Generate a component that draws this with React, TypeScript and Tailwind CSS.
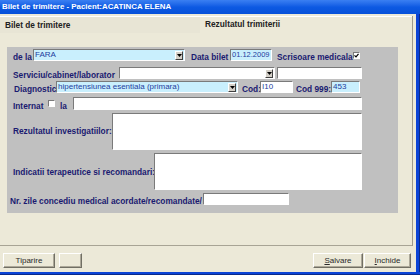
import React from "react";

const LBL = "text-[8.3px] font-bold text-[#1a1a70] leading-none whitespace-nowrap";

function DropBtn() {
  return (
    <div className="w-[8px] h-[9px] mr-[1px] shrink-0 bg-[#d4d0c8] border border-t-white border-l-white border-b-[#404040] border-r-[#404040] flex items-center justify-center">
      <svg width="5" height="3" viewBox="0 0 5 3">
        <path d="M0 0H5L2.5 3Z" fill="#000" />
      </svg>
    </div>
  );
}

function Field({ className, value, arrow, small }: { className: string; value?: string; arrow?: boolean; small?: boolean }) {
  return (
    <div
      className={`flex items-center shrink-0 border border-t-[#7a7a7a] border-l-[#7a7a7a] border-b-white border-r-white ${className}`}
    >
      <span
        className={`flex-1 pl-[1px] text-[#23409e] leading-none overflow-hidden whitespace-nowrap font-['Liberation_Sans'] ${small ? "text-[7.5px]" : "text-[8px]"}`}
      >
        {value}
      </span>
      {arrow && <DropBtn />}
    </div>
  );
}

function Check({ checked }: { checked?: boolean }) {
  return (
    <div className="w-[7px] h-[7px] shrink-0 bg-white border border-t-[#7a7a7a] border-l-[#7a7a7a] border-b-white border-r-white flex items-center justify-center">
      {checked && (
        <svg width="5" height="5" viewBox="0 0 5 5">
          <path d="M0.5 2.3L2 3.8L4.5 0.8" stroke="#000" strokeWidth="1.2" fill="none" />
        </svg>
      )}
    </div>
  );
}

function Btn({ className, children }: { className: string; children: React.ReactNode }) {
  return (
    <div
      className={`h-[15px] shrink-0 bg-[#ece9d8] border border-t-white border-l-white border-b-[#716f64] border-r-[#716f64] shadow-[inset_-1px_-1px_0_#aca899] flex items-center justify-center text-[8px] text-[#2a2a2a] leading-none ${className}`}
    >
      {children}
    </div>
  );
}

export default function App() {
  return (
    <div className="w-[420px] h-[275px] bg-[#ece9d8] flex flex-col overflow-hidden font-['Liberation_Sans']">
      {/* Title bar */}
      <div className="h-[14px] shrink-0 bg-gradient-to-b from-[#3a7ff2] via-[#0d5ae3] to-[#0750d8] flex items-center pl-[2px]">
        <span className="text-[7.9px] font-bold text-white leading-none whitespace-nowrap">
          Bilet de trimitere - Pacient:ACATINCA ELENA
        </span>
      </div>

      <div className="flex flex-1">
        <div className="w-[416px] flex flex-col">
          <div className="h-[2px]" />
          <div className="w-[413px] border-r border-r-[#9d9a8c] flex flex-col">
            {/* Tabs */}
            <div className="h-[17px] flex border-t border-t-white">
              <div className="w-[200px] bg-[#e8e5d5] flex items-center pl-[5px]">
                <span className="text-[8.3px] font-bold text-[#222] leading-none whitespace-nowrap">Bilet de trimitere</span>
              </div>
              <div className="flex-1 flex items-center pl-[5px] pb-[2px]">
                <span className="text-[8.3px] font-bold text-[#222] leading-none whitespace-nowrap">Rezultatul trimiterii</span>
              </div>
            </div>
            {/* Panel */}
            <div className="h-[213px] border-b border-b-[#a8a495] pt-[14px]">
              <div className="ml-[7px] w-[391px] h-[166px] bg-[#c0c0c0] pt-[2px] flex flex-col">
                {/* Row 1 */}
                <div className="h-[12px] flex items-center">
                  <div className="w-[26px] pl-[6px]"><span className={LBL}>de la</span></div>
                  <Field className="w-[152px] h-full bg-[#c9effd]" value="FARA" arrow />
                  <div className="w-[45px] pl-[6px]"><span className={LBL}>Data bilet</span></div>
                  <Field className="w-[42px] h-full bg-[#c9effd]" value="01.12.2009" small />
                  <div className="w-[81px] pl-[5px]"><span className={LBL}>Scrisoare medicala</span></div>
                  <Check checked />
                </div>
                {/* Row 2 */}
                <div className="mt-[6px] h-[12px] flex items-center">
                  <div className="w-[112px] pl-[6px]"><span className={LBL}>Serviciu/cabinet/laborator</span></div>
                  <Field className="w-[156px] h-full bg-white" arrow />
                  <Field className="ml-[2px] w-[85px] h-full bg-white" />
                </div>
                {/* Row 3 */}
                <div className="mt-[2px] h-[12px] flex items-center">
                  <div className="w-[49px] pl-[7px]"><span className={LBL}>Diagnostic</span></div>
                  <Field className="w-[182px] h-full bg-[#c9effd]" value="hipertensiunea esentiala (primara)" arrow />
                  <div className="w-[22px] pl-[4px]"><span className={LBL}>Cod:</span></div>
                  <Field className="w-[33px] h-full bg-white" value="I10" />
                  <div className="w-[38px] pl-[3px]"><span className={LBL}>Cod 999:</span></div>
                  <Field className="w-[29px] h-full bg-[#c9effd]" value="453" />
                </div>
                {/* Row 4 */}
                <div className="mt-[4px] h-[13px] flex items-center">
                  <div className="w-[41px] pl-[6px]"><span className={LBL}>Internat</span></div>
                  <Check />
                  <div className="w-[18px] pl-[5px]"><span className={LBL}>la</span></div>
                  <Field className="w-[289px] h-full bg-white" />
                </div>
                {/* Row 5 */}
                <div className="mt-[3px] h-[37px] flex items-start">
                  <div className="w-[105px] pl-[6px] pt-[4px]"><span className={LBL}>Rezultatul investigatiilor:</span></div>
                  <Field className="w-[250px] h-full bg-white" />
                </div>
                {/* Row 6 */}
                <div className="mt-[3px] h-[37px] flex items-start">
                  <div className="w-[147px] pl-[6px] pt-[5px]"><span className={LBL}>Indicatii terapeutice si recomandari:</span></div>
                  <Field className="w-[208px] h-full bg-white" />
                </div>
                {/* Row 7 */}
                <div className="mt-[3px] h-[12px] flex items-center">
                  <div className="w-[196px] pl-[3px]"><span className={LBL}>Nr. zile concediu medical acordate/recomandate/</span></div>
                  <Field className="w-[86px] h-full bg-white" />
                </div>
              </div>
            </div>
          </div>
          {/* Buttons */}
          <div className="mt-[7px] flex">
            <Btn className="ml-[3px] w-[52px]">Tiparire</Btn>
            <Btn className="ml-[4px] w-[23px]">{""}</Btn>
            <div className="flex-1" />
            <Btn className="w-[50px]"><span><span className="underline">S</span>alvare</span></Btn>
            <Btn className="ml-[1px] mr-[5px] w-[47px]"><span><span className="underline">I</span>nchide</span></Btn>
          </div>
        </div>
        <div className="w-[4px] bg-[#0b44d6] border-r border-r-[#0a2a8a]" />
      </div>
      <div className="h-[3px] shrink-0 bg-[#0b44d6] border-b border-b-[#0a2a8a]" />
    </div>
  );
}
